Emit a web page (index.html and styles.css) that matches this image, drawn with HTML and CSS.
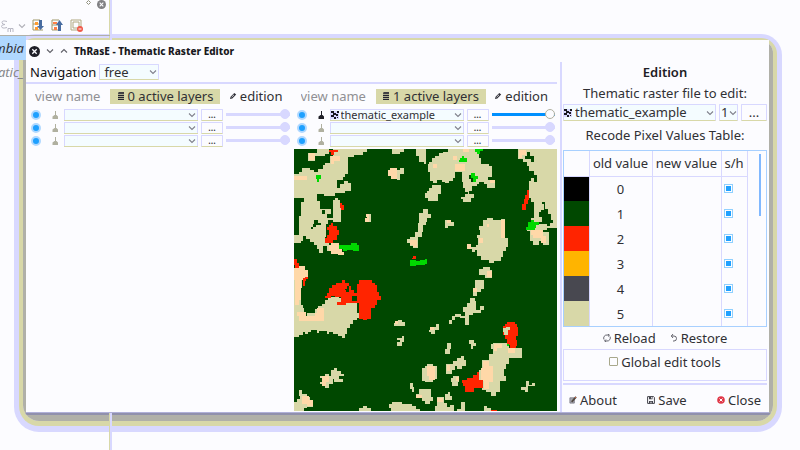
FILE: index.html
```html
<!DOCTYPE html>
<html lang="en">
<head>
<meta charset="utf-8">
<title>ThRasE - Thematic Raster Editor</title>
<link rel="stylesheet" href="styles.css">
</head>
<body>
<svg class="sprite" aria-hidden="true">
  <symbol id="chevron" viewBox="0 0 8 8"><path d="M1 2.5 4 5.5 7 2.5" fill="none" stroke="currentColor" stroke-width="1.1"/></symbol>
  <symbol id="stack" viewBox="0 0 8 8"><path d="M1 1.2h6M1 3.4h6M1 5.4h6M1 7.3h6" stroke="#242430" stroke-width="1.2"/><path d="M2 .8h5" stroke="#242430"/></symbol>
  <symbol id="pencil" viewBox="0 0 8 8"><path d="M1 7 1.6 4.8 5.3 1 7.2 2.6 3.3 6.4Z" fill="#303038"/><path d="M2.6 5.2 5 2.8" stroke="#fcfcff" stroke-width=".8"/></symbol>
  <symbol id="brush" viewBox="0 0 8 8"><path d="M4.500 0v4" stroke="currentColor"/><path d="M1.500 8V5.500L3.500 4h2l1.500 1.500V8Z" fill="currentColor"/></symbol>
  <symbol id="raster" viewBox="0 0 8 8"><path d="M0 0h8v8H0z" fill="#d8d8ff"/><path d="M0 0h3v2h2v2H3v2H0V4h2V2H0zM6 0h2v2H6zM5 3h2v2H5zM3 6h2v2H3zM6 6h1v1H6z" fill="#181820"/></symbol>
  <symbol id="reload" viewBox="0 0 8 8"><path d="M1 5.5A3.1 3.1 0 0 1 4 1h2M7 2.5A3.1 3.1 0 0 1 4 7H2M5 0l1.5 1.2L5 2.5M3 5.5 1.5 7 3 8" fill="none" stroke="#55555f" stroke-width=".9"/></symbol>
  <symbol id="restore" viewBox="0 0 8 8"><path d="M3 0 1.3 2 3 4M1.5 2H4a2.4 2.4 0 0 1 0 5H3" fill="none" stroke="#55555f" stroke-width=".9"/></symbol>
  <symbol id="about" viewBox="0 0 9 9"><path d="M1 2h5v6H1z" fill="#a8a8b0" stroke="#70707c" stroke-width=".8"/><path d="M3 6.5 8 1" stroke="#504840" stroke-width="2"/><path d="m6.7 1.2 1.2 1" stroke="#e06040"/></symbol>
  <symbol id="save" viewBox="0 0 8 8"><path d="M.6.6h6l.8.8v6H.6z" fill="#fcfcff" stroke="#44444c" stroke-width="1"/><path d="M2 .8h3.5v2.5H2zM2 5h4v2.5H2z" fill="#44444c"/><path d="M3.5 5.7h1v1.5h-1zM4 1h.8v1.4H4z" fill="#fcfcff"/></symbol>
  <symbol id="close" viewBox="0 0 8 8"><circle cx="4" cy="4" r="3.8" fill="#e03848"/><path d="m2.5 2.5 3 3m0-3-3 3" stroke="#fff" stroke-width="1"/></symbol>
  <symbol id="window-close" viewBox="0 0 10 10"><circle cx="5" cy="5" r="5" fill="currentColor"/><path d="m3 3 4 4m0-4L3 7" stroke="#fcfcff" stroke-width="1.2"/></symbol>
</svg>

<aside class="host">
  <div class="host-title">
    <svg width="5" height="5" viewBox="0 0 5 5"><path d="M2.5.5l2 2-2 2-2-2z" fill="none" stroke="#90907c"/></svg>
    <svg class="muted" width="9" height="9"><use href="#window-close"/></svg>
  </div>
  <div class="host-tools">
    <svg width="14" height="14" viewBox="0 0 14 14"><path d="M7 2.500Q2 1 2 3.500 2 5.500 5 5.500 1.500 5.500 1.500 7.500 2 10 7 8.500M8 13V9.500h2.500V13M10.500 9.500H13V13" fill="none" stroke="#b8b8c4"/></svg>
    <svg class="faint" width="8" height="8"><use href="#chevron"/></svg>
    <svg class="gap-left" width="13" height="13" viewBox="0 0 13 13"><path d="M1 1h7M1 5h6M1 11h10M1 1v10" stroke="#a09868"/><path d="M3 3h3v3H3zM3 8h3v3H3z" fill="#ff9c30"/><path d="M7 1h3v6h2L8.500 11 5 7h2z" fill="#486ca0"/></svg>
    <svg class="gap-left" width="13" height="13" viewBox="0 0 13 13"><path d="M1 1h7M1 6h6M1 11h7M1 1v10" stroke="#a09868"/><path d="M2 3h4v2H2zM3 8h3v3H3z" fill="#ff8048"/><path d="M7 12h3V6h2L8.500 1 5 6h2z" fill="#486ca0"/></svg>
    <svg class="gap-left" width="13" height="13" viewBox="0 0 13 13"><path d="M1 1h10v10H1zM3 3h6v6H3z" fill="#fcfcff" stroke="#b0a880"/><circle cx="10" cy="10" r="3" fill="#f05848"/><path d="M8.500 10h3" stroke="#fff"/></svg>
  </div>
  <div class="host-item selected">mbia</div>
  <div class="host-item">atic_</div>
</aside>

<main class="dialog">
  <header class="titlebar">
    <svg class="dark" width="11" height="11"><use href="#window-close"/></svg>
    <svg width="8" height="8"><use href="#chevron"/></svg>
    <svg class="flip" width="8" height="8"><use href="#chevron"/></svg>
    <h1>ThRasE - Thematic Raster Editor</h1>
  </header>
  <div class="content">
    <section class="workspace">
      <div class="navigation">
        <label for="nav">Navigation</label>
        <span class="combo nav-combo"><select id="nav"><option>free</option></select><svg><use href="#chevron"/></svg></span>
      </div>
      <div class="views">
        <section class="view">
          <div class="view-head">
            <input class="view-name" placeholder="view name" aria-label="View name">
            <button class="layers"><svg><use href="#stack"/></svg>0 active layers</button>
            <button class="plain"><svg><use href="#pencil"/></svg>edition</button>
          </div>
          <div class="layer"><input type="checkbox" class="dot" aria-label="Show layer 1" checked><svg class="brush"><use href="#brush"/></svg><span class="combo"><select aria-label="Layer 1"><option></option></select><svg><use href="#chevron"/></svg></span><button class="browse">...</button><input type="range" aria-label="Opacity 1" value="100" disabled></div>
          <div class="layer"><input type="checkbox" class="dot" aria-label="Show layer 2" checked><svg class="brush"><use href="#brush"/></svg><span class="combo"><select aria-label="Layer 2"><option></option></select><svg><use href="#chevron"/></svg></span><button class="browse">...</button><input type="range" aria-label="Opacity 2" value="100" disabled></div>
          <div class="layer"><input type="checkbox" class="dot" aria-label="Show layer 3" checked><svg class="brush"><use href="#brush"/></svg><span class="combo"><select aria-label="Layer 3"><option></option></select><svg><use href="#chevron"/></svg></span><button class="browse">...</button><input type="range" aria-label="Opacity 3" value="100" disabled></div>
        </section>
        <section class="view">
          <div class="view-head">
            <input class="view-name" placeholder="view name" aria-label="View name">
            <button class="layers"><svg><use href="#stack"/></svg>1 active layers</button>
            <button class="plain"><svg><use href="#pencil"/></svg>edition</button>
          </div>
          <div class="layer"><input type="checkbox" class="dot" aria-label="Show layer 1" checked><svg class="brush dark"><use href="#brush"/></svg><span class="combo with-icon"><svg class="file-icon"><use href="#raster"/></svg><select aria-label="Layer 1"><option>thematic_example</option></select><svg><use href="#chevron"/></svg></span><button class="browse">...</button><input type="range" aria-label="Opacity 1" value="100"></div>
          <div class="layer"><input type="checkbox" class="dot" aria-label="Show layer 2" checked><svg class="brush"><use href="#brush"/></svg><span class="combo"><select aria-label="Layer 2"><option></option></select><svg><use href="#chevron"/></svg></span><button class="browse">...</button><input type="range" aria-label="Opacity 2" value="100" disabled></div>
          <div class="layer"><input type="checkbox" class="dot" aria-label="Show layer 3" checked><svg class="brush"><use href="#brush"/></svg><span class="combo"><select aria-label="Layer 3"><option></option></select><svg><use href="#chevron"/></svg></span><button class="browse">...</button><input type="range" aria-label="Opacity 3" value="100" disabled></div>
          <svg class="map" viewBox="0 0 789 786" role="img" aria-label="Thematic map">
            <path class="forest" d="M0 0h789v786H0z"/>
            <g>
              <path class="sand" d="M0 75H15V68H24V58H48V64H60V70H72V60H88V48H94V42H108V20H118V0H218V10H206V18H180V24H162V75H154V84H148V92H128V116H138V104H150V95H162V102H170V126H152V132H122V140H90V136H68V156H78V180H110V206H118V154H122V146H132V154H138V164H142V218H118V214H102V224H96V264H92V278H104V304H98V290H88V312H76V300H70V286H60V278H48V270H36V262H28V274H22V280H0V258H14V202H20V160H30V148H0Z"/>
              <path class="sand" d="M42 12H70V0H106V14H92V20H64V36H42ZM294 0H330V10H318V14H294ZM364 0H396V46H388V38H374V20H364ZM396 180H386V192H374V222H370V250H362V264H346V270H338V280H346V290H356V296H370V264H382V250H386V228H396Z"/>
              <path class="peach" d="M0 82H38V94H0ZM110 22H138V36H120V46H110ZM44 12H64V34H44ZM280 62H286V56H308V66H316V82H308V90H290V80H280ZM216 196H232V220H214V208H218ZM106 286H112V280H136V300H144V308H150V318H132V314H112V304H104ZM346 272H368V292H356V286H346ZM0 356H10V350H34V362H42V382H36V393H0Z"/>
              <path class="sand" d="M308 64H318V58H328V76H318V92H308ZM226 194h6v24h-6z"/>
              <path class="forest" d="M50 234H56V226H60V214H72V222H82V228H66V234H58V240H50ZM100 196H110V208H100ZM84 184H92V196H84Z"/>
              <path class="red" d="M104 2H132V10H120V18H110V10H104ZM138 162H144V168H150V184H140V176H138ZM100 234H106V228H112V222H118V232H130V244H136V258H130V272H118V280H92V266H98V258H106V244H100ZM356 320H366V330H354ZM0 330H8V342H14V356H4V346H0ZM26 386H34V382H42V390H36V396H26ZM200 392H234V400H200Z"/>
              <path class="green" d="M66 78H80V90H76V98H70V90H66ZM134 286H170V282H188V288H196V306H176V302H158V306H148V298H134ZM348 332H366V336H376V332H393V346H366V350H348Z"/>
            </g>
            <g transform="translate(393 0)">
              <path class="sand" d="M10 38H20V26H30V20H40V12H52V8H68V0H152V8H160V26H166V44H192V50H200V84H188V94H210V116H186V106H176V98H162V106H154V112H140V126H132V134H146V148H136V158H112V150H108V144H120V134H128V128H120V118H114V98H110V70H90V88H82V96H70V102H60V98H50V92H36V102H22V96H14V70H8V46H10ZM4 126H10V116H20V108H46V136H38V156H8V148H0V132H4ZM0 180H8V196H16V208H6V220H0ZM278 0H396V238H358V230H374V222H384V214H376V196H368V180H360V158H350V166H356V182H346V190H342V204H350V218H338V226H364V242H352V250H370V286H354V276H342V286H324V274H314V246H306V236H312V218H318V206H326V158H318V146H310V96H318V86H326V100H334V78H326V66H312V50H304V38H292V30H278ZM174 214H184V208H204V214H228V210H240V266H248V294H242V306H234V322H226V334H206V342H190V332H168V320H156V302H148V308H140V300H126V284H138V292H152V286H158V266H154V258H164V242H160V230H174ZM162 360H172V352H194V362H200V386H180V378H162ZM58 212H78V218H86V230H68V236H58Z"/>
              <path class="peach" d="M84 20H96V34H84ZM24 46H34V58H24ZM90 44H120V66H90ZM114 0H132V8H114ZM194 94H210V102H194ZM282 4H302V18H290V26H282ZM316 244H352V262H362V280H346V268H324V258H316ZM126 284H138V298H126ZM162 268H172V282H162ZM184 226h8v8h-8zM228 212h10v54h-10zM186 364H200V382H186ZM64 214h12v8H64z"/>
              <path class="forest" d="M132 78H150V98H136V90H132ZM304 8H314V22H326V40H318V30H298V22H304Z"/>
              <path class="red" d="M304 122H312V152H308V166H302V184H290V166H296V150H300V138H304Z"/>
              <path class="green" d="M104 28H110V22H116V28H126V40H102V34H104ZM136 72H148V80H158V90H152V98H142V88H136ZM148 0H172V6H164V14H156V8H148ZM308 218H318V212H326V218H340V228H332V236H328V244H302V234H308ZM0 330h4v14h-4z"/>
            </g>
            <g transform="translate(0 393)">
              <path class="sand" d="M0 0H24V22H20V74H26V84H30V106H38V98H64V86H72V76H84V70H92V58H102V50H124V46H136V54H146V66H190V98H200V112H188V120H178V130H168V144H160V160H154V174H144V166H132V160H116V154H104V160H98V152H76V158H70V150H52V156H42V160H34V154H26V164H14V170H0ZM298 128H304V122H312V118H322V124H332V138H298ZM322 168H330V184H324V198H308V186H316V180H308V172H322ZM78 286H94V280H104V288H110V270H120V264H128V272H142V282H150V286H136V296H148V304H120V296H116V312H104V322H94V312H78V304H86V294H78ZM14 330H24V342H38V350H48V358H58V380H38V384H30V393H0V366H8V356H18V346H14ZM384 262H396V302H384ZM348 308H356V320H360V334H352V326H348ZM364 340H374V326H396V362H382V354H368ZM284 370H292V364H322V370H352V378H364V386H376V393H290V382H284ZM196 384H206V376H220V382H230V393H196Z"/>
              <path class="peach" d="M4 0H20V60H14V74H4ZM10 94H36V108H64V98H70V84H90V122H14V108H10ZM84 288H104V304H96V318H84ZM24 346H46V358H56V378H40V370H24ZM302 122h10v8h-10zM366 344h18v10h-18z"/>
              <path class="red" d="M92 46H100V38H106V22H114V14H126V8H144V0H152V8H166V16H172V28H180V38H190V10H196V0H234V8H242V14H250V34H256V46H260V60H250V74H242V84H230V116H220V120H206V116H194V68H156V74H128V64H140V50H124V46H112V54H92ZM26 0H34V16H26Z"/>
              <path class="forest" d="M152 26H158V18H164V36H156V30H152ZM174 46H188V62H174Z"/>
            </g>
            <g transform="translate(393 393)">
              <path class="sand" d="M148 0H176V26H168V36H154V46H142V22H148ZM130 68H134V54H148V62H152V90H164V76H176V88H168V98H142V104H130V134H120V114H104V110H88V118H80V130H70V118H80V108H90V102H106V108H120V96H114V80H126V68ZM12 148H22V140H32V132H40V150H28V160H16V154H12ZM130 180H146V188H152V198H144V206H136V192H130ZM66 188H78V206H74V220H58V206H66ZM94 232H108V228H116V240H122V256H110V266H94V256H84V242H94ZM62 250H82V256H90V270H80V282H62ZM4 250H24V256H36V296H24V304H0V256H4ZM76 294H84V288H102V304H98V318H80V304H76ZM0 326H16V350H24V362H14V372H0ZM58 342H68V336H74V346H80V358H58ZM36 350H56V368H64V380H74V374H86V393H28V378H36ZM106 364H118V386H120V393H96V386H108ZM198 192H204V188H246V192H250V202H290V232H252V250H242V266H236V288H242V302H224V334H212V346H198V336H182V328H170V302H162V270H170V240H192V222H202V206H198ZM302 302H312V314H320V308H328V316H308V334H298V328H288V320H302ZM176 376H186V382H198V393H176Z"/>
              <path class="peach" d="M4 256H28V300H10V286H4ZM172 242H190V256H204V306H190V326H176V302H168V264H172ZM64 254H74V272H64ZM36 354H52V366H36ZM14 140h12v8H14zM142 24h12v12h-12zM206 192H230V202H216V212H206ZM248 204H270V218H248ZM92 290h10v12h-10z"/>
              <path class="red" d="M232 136H238V130H244V124H268V130H274V140H278V168H272V178H276V196H272V202H254V194H246V176H240V164H232ZM110 298H124V294H144V284H154V274H162V298H172V322H146V334H120V318H112V308H110ZM196 388H214V396H196Z"/>
              <path class="sand" d="M234 144H242V140H254V150H248V164H236V156H232V148H234Z"/>
              <path class="green" d="M246 192h6v6h-6z"/>
            </g>
          </svg>
        </section>
      </div>
    </section>

    <section class="editor">
      <h2>Edition</h2>
      <label for="file">Thematic raster file to edit:</label>
      <div class="file-row">
        <span class="combo with-icon"><svg class="file-icon"><use href="#raster"/></svg><select id="file"><option>thematic_example</option></select><svg><use href="#chevron"/></svg></span>
        <span class="combo band"><select aria-label="Band"><option>1</option></select><svg><use href="#chevron"/></svg></span>
        <button class="browse">...</button>
      </div>
      <p class="caption">Recode Pixel Values Table:</p>
      <div class="table-box">
        <table>
          <thead><tr><th class="swatch"></th><th class="old">old value</th><th class="new">new value</th><th class="show">s/h</th></tr></thead>
          <tbody>
            <tr><td class="c0"></td><td>0</td><td></td><td><input type="checkbox" class="box" aria-label="Show 0" checked></td></tr>
            <tr><td class="c1"></td><td>1</td><td></td><td><input type="checkbox" class="box" aria-label="Show 1" checked></td></tr>
            <tr><td class="c2"></td><td>2</td><td></td><td><input type="checkbox" class="box" aria-label="Show 2" checked></td></tr>
            <tr><td class="c3"></td><td>3</td><td></td><td><input type="checkbox" class="box" aria-label="Show 3" checked></td></tr>
            <tr><td class="c4"></td><td>4</td><td></td><td><input type="checkbox" class="box" aria-label="Show 4" checked></td></tr>
            <tr><td class="c5"></td><td>5</td><td></td><td><input type="checkbox" class="box" aria-label="Show 5" checked></td></tr>
          </tbody>
        </table>
        <div class="scrollbar"></div>
      </div>
      <div class="reset-row">
        <button class="plain"><svg><use href="#reload"/></svg>Reload</button>
        <button class="plain"><svg><use href="#restore"/></svg>Restore</button>
      </div>
      <div class="tools-box"><input type="checkbox" id="tools"><label for="tools">Global edit tools</label></div>
      <footer class="actions">
        <button class="plain"><svg><use href="#about"/></svg>About</button>
        <button class="plain"><svg><use href="#save"/></svg>Save</button>
        <button class="plain"><svg><use href="#close"/></svg>Close</button>
      </footer>
    </section>
  </div>
</main>
</body>
</html>
```
FILE: styles.css
```css
:root {
  --paper: #fcfcff;
  --line: #d8d8ff;
  --khaki: #d8d8a8;
  --ink: #303034;
}

* { box-sizing: border-box; }

body {
  margin: 0;
  min-height: 100vh;
  padding: 40px 31px 36px 26px;
  background: var(--paper);
  color: var(--ink);
  font: 13px/18px "Noto Sans", sans-serif;
  overflow: hidden;
}

.sprite { position: absolute; width: 0; height: 0; }

button, input, select { margin: 0; padding: 0; font: inherit; color: inherit; }
button { border: 0; background: none; }
h1, h2, p { margin: 0; }
svg { flex: none; }

/* Application window behind the dialog */
.host {
  position: absolute;
  inset: 0 auto 0 0;
  z-index: -1;
  width: 112px;
  border-right: 2px solid var(--line);
  box-shadow: inset -1px 0 var(--khaki);
}
.host-title { display: flex; justify-content: flex-end; gap: 6px; height: 16px; padding: 0 4px 0 0; }
.host-tools { display: flex; align-items: center; height: 20px; gap: 4px; border-bottom: 1px solid #b0b0a8; }
.gap-left { margin-left: 2px; }
.host-item { display: flex; justify-content: flex-end; width: 26px; height: 24px; padding-right: 2px; line-height: 24px; font-style: italic; color: #88888c; }
.host-item.selected { background: #b0d8ff; color: var(--ink); }
.muted { color: #808084; }
.faint { color: #b0b0b8; }
.dark { color: #202028; }

/* Dialog frame */
.dialog { position: relative; background: var(--paper); border-bottom: 1px solid #b0b0d8; }
.dialog::before {
  content: "";
  position: absolute;
  inset: 1px -4px -9px -3px;
  z-index: -2;
  border-radius: 12px 12px 16px 16px;
  background: linear-gradient(#b0b0a8 0 calc(100% - 8px), #9090ac 0 calc(100% - 6px), #b0b0a8 0);
  box-shadow: 0 1px 0 4px var(--khaki), 0 2px 0 9px var(--line);
}
.titlebar { display: flex; align-items: center; gap: 6px; height: 22px; padding-left: 3px; color: #606068; }
.titlebar h1 { font-size: 10px; line-height: 14px; font-weight: 800; color: #181820; }
.flip { transform: rotate(180deg); }

.content { display: grid; grid-template-columns: minmax(0, 1fr) 209px; }
.workspace { padding-right: 3px; }

.navigation { display: flex; align-items: center; gap: 3px; height: 22px; padding-left: 4px; border-bottom: 2px solid var(--line); }
.navigation label { color: #101014; }

.combo { position: relative; display: flex; min-width: 0; }
.combo select {
  width: 100%;
  height: 17px;
  padding-left: 4px;
  appearance: none;
  border: 1px solid var(--line);
  border-bottom-color: var(--khaki);
  border-radius: 1px;
  background: #f4fcff;
  line-height: 15px;
}
.combo svg { position: absolute; top: 0; bottom: 0; right: 2px; width: 8px; height: 8px; margin: auto 0; color: #80808c; pointer-events: none; }
.combo .file-icon { left: 1px; right: auto; }
.combo.with-icon select { padding-left: 11px; }
.nav-combo { width: 60px; }
.combo.nav-combo select { height: 16px; line-height: 14px; }

.views { display: grid; grid-template-columns: 1fr 1fr; gap: 2px; padding-left: 2px; }
.view-head { display: flex; align-items: center; height: 24px; padding: 0 9px 0 7px; }
.view-name { width: 75px; border: 0; background: none; }
.view-name::placeholder { color: #909094; opacity: 1; }
.layers { display: flex; align-items: center; justify-content: center; gap: 3px; width: 110px; height: 15px; line-height: 15px; background: var(--khaki); }
.layers svg, .plain svg { width: 8px; height: 8px; }
.plain { display: flex; align-items: center; gap: 3px; }
.view-head .plain { margin-left: auto; }

.layer {
  display: grid;
  grid-template-columns: 17px 10px 134px 22px 1fr;
  column-gap: 3px;
  align-items: center;
  height: 13px;
  padding: 0 2px 0 3px;
  font-size: 11px;
  line-height: 11px;
}
.layer .brush { width: 8px; height: 8px; }
.layer .brush:not(.dark) { color: #b0b0a0; }
.layer .combo { height: 12px; background: #f4fcff; box-shadow: inset 0 -1px var(--khaki), inset 0 0 0 1px var(--line); }
.layer .combo select { height: 13px; border: 0; background: none; line-height: 12px; }
.dot { appearance: none; width: 10px; height: 10px; border: 2px solid #b0d8ff; border-radius: 50%; background: #1ea0ff; }
.browse { height: 17px; border: 1px solid var(--line); border-bottom-color: var(--khaki); border-radius: 1px; line-height: 15px; }
.layer .browse { height: 12px; font-size: 9px; line-height: 9px; font-weight: 600; }

input[type="range"] { width: 100%; min-width: 0; height: 11px; appearance: none; background: none; }
input[type="range"]::-webkit-slider-runnable-track { height: 3px; background: #0090ff; }
input[type="range"]::-webkit-slider-thumb { appearance: none; width: 10px; height: 10px; margin-top: -4px; border: 1px solid #b0b0a0; border-radius: 50%; background: var(--paper); }
input[type="range"]:disabled::-webkit-slider-runnable-track { background: var(--line); }
input[type="range"]:disabled::-webkit-slider-thumb { border-color: var(--line); background: var(--line); }

.map { display: block; width: 100%; height: auto; margin-top: 2px; shape-rendering: crispEdges; }
.forest { fill: #004800; }
.sand { fill: #d8d8a8; }
.peach { fill: #ffd8a8; }
.red { fill: #ff2400; }
.green { fill: #00d800; }

/* Edition panel */
.editor { display: flex; flex-direction: column; padding: 0 2px 0 1px; border-left: 2px solid var(--line); text-align: center; }
.editor h2 { font-size: 13px; line-height: 20px; color: #202024; font-weight: 600; }
.editor > label { line-height: 22px; }
.file-row { display: grid; grid-template-columns: 1fr 19px 26px; gap: 3px; }
.combo.band select { padding-left: 1px; }
.combo.band svg { right: 1px; }
.caption { line-height: 28px; }

.table-box { display: flex; justify-content: space-between; margin-top: 1px; border: 1px solid #a8d0ff; }
table { border-collapse: collapse; table-layout: fixed; width: 183px; }
th, td { height: 25px; padding: 0; border-right: 1px solid var(--line); font-weight: 400; line-height: 18px; }
th { border-bottom: 1px solid var(--line); }
.swatch { width: 25px; }
.old { width: 63px; }
.new { width: 69px; }
.show { width: 26px; }
.box { display: block; appearance: none; width: 9px; height: 9px; margin-left: 2px; border: 1px solid #90d0ff; background: #1ea0ff; box-shadow: inset 0 0 0 1px var(--paper); }
.c0 { background: #000; }
.c1 { background: #004800; }
.c2 { background: #ff2400; }
.c3 { background: #ffb400; }
.c4 { background: #484850; }
.c5 { background: #d8d8a8; }
.scrollbar { width: 2px; height: 62px; margin: 3px 5px 0 0; background: #80b8ff; }

.reset-row { display: flex; justify-content: center; gap: 14px; height: 22px; }
.tools-box { display: flex; justify-content: center; gap: 3px; height: 32px; padding-top: 3px; border: 1px solid var(--line); }
.tools-box input { appearance: none; width: 9px; height: 9px; margin-top: 4px; border: 1px solid #a8a88c; border-radius: 1px; }
.actions { display: flex; justify-content: space-between; margin-top: 2px; padding: 6px 6px 3px; border-top: 2px solid var(--line); }
```
